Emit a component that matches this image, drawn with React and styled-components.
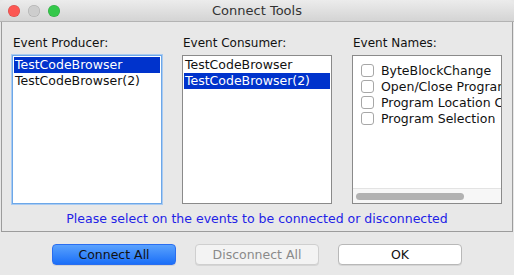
import React from "react";
import styled, { createGlobalStyle } from "styled-components";

const GlobalStyle = createGlobalStyle`
  html, body {
    margin: 0;
    padding: 0;
    background: #e8e8e8;
  }
  body {
    font-family: "DejaVu Sans", "Liberation Sans", sans-serif;
    font-size: 12.5px;
    color: #111;
  }
`;

const Window = styled.div`
  width: 514px;
  height: 275px;
  display: flex;
  flex-direction: column;
  background: #e8e8e8;
  overflow: hidden;
`;

const TitleBar = styled.div`
  height: 22px;
  box-sizing: border-box;
  display: flex;
  align-items: center;
  position: relative;
  background: linear-gradient(#ececec, #d4d4d4);
  border-bottom: 1px solid #b3b3b3;
  border-radius: 5px 5px 0 0;
  padding-left: 8px;
  gap: 8px;
`;

const Light = styled.span`
  width: 12px;
  height: 12px;
  border-radius: 50%;
  background: ${({ color }) => color};
  box-shadow: inset 0 0 0 0.5px rgba(0, 0, 0, 0.18);
`;

const Title = styled.div`
  position: absolute;
  left: 0;
  right: 0;
  text-align: center;
  font-size: 13px;
  color: #333;
  pointer-events: none;
`;

const Panel = styled.div`
  margin: 0 1px;
  height: 210px;
  box-sizing: border-box;
  border: 1px solid #9c9c9c;
  border-top: none;
  display: flex;
  flex-direction: column;
  padding: 9px 10px 0 10px;
`;

const Columns = styled.div`
  display: flex;
  gap: 20px;
`;

const Column = styled.div`
  width: 150px;
  display: flex;
  flex-direction: column;
`;

const Label = styled.div`
  height: 24px;
  box-sizing: border-box;
  padding: 2px 0 0 1px;
  line-height: 20px;
  font-size: 12px;
`;

const ListBox = styled.div`
  height: 149px;
  box-sizing: border-box;
  background: #fff;
  border: 1px solid ${({ focused }) => (focused ? "#6ca7e8" : "#8a8a8a")};
  box-shadow: ${({ focused }) => (focused ? "0 0 0 1px #a9cbf2" : "none")};
  padding: 1px;
  display: flex;
  flex-direction: column;
  position: relative;
  overflow: hidden;
`;

const ListItem = styled.div`
  height: 16px;
  line-height: 16px;
  padding-left: 1px;
  white-space: nowrap;
  background: ${({ selected }) => (selected ? "#0033cc" : "transparent")};
  color: ${({ selected }) => (selected ? "#fff" : "#111")};
`;

const CheckList = styled.div`
  display: flex;
  flex-direction: column;
  padding-top: 5px;
`;

const CheckRow = styled.label`
  height: 16px;
  display: flex;
  align-items: center;
  gap: 7px;
  padding-left: 7px;
  white-space: nowrap;
`;

const Box = styled.span`
  flex: none;
  width: 13px;
  height: 13px;
  box-sizing: border-box;
  border: 1px solid #a7a7a7;
  border-radius: 3px;
  background: #fff;
`;

const ScrollTrack = styled.div`
  position: absolute;
  left: 0;
  right: 0;
  bottom: 0;
  height: 14px;
  background: #f7f7f7;
  border-top: 1px solid #e3e3e3;
  display: flex;
  align-items: center;
  padding-left: 3px;
`;

const ScrollThumb = styled.div`
  width: 108px;
  height: 7px;
  border-radius: 4px;
  background: #b2b2b2;
`;

const Message = styled.div`
  margin-top: 7px;
  text-align: center;
  color: #2222e6;
  line-height: 16px;
`;

const ButtonRow = styled.div`
  display: flex;
  justify-content: center;
  gap: 19px;
  padding-top: 12px;
`;

const Button = styled.button`
  width: 124px;
  height: 21px;
  box-sizing: border-box;
  font-family: inherit;
  font-size: 12.5px;
  border-radius: 4px;
  padding: 0;
  border: 1px solid
    ${({ variant }) =>
      variant === "primary" ? "#2a6ef0" : variant === "disabled" ? "#cfcfcf" : "#b8b8b8"};
  background: ${({ variant }) =>
    variant === "primary"
      ? "linear-gradient(#5aa2fd, #1b6ff8)"
      : variant === "disabled"
      ? "#f3f3f3"
      : "#fff"};
  color: ${({ variant }) =>
    variant === "primary" ? "#111" : variant === "disabled" ? "#8a8a8a" : "#111"};
  box-shadow: 0 1px 0 rgba(0, 0, 0, 0.08);
`;

export default function App() {
  const events = [
    "ByteBlockChange",
    "Open/Close Program",
    "Program Location Changed",
    "Program Selection",
  ];
  return (
    <Window>
      <GlobalStyle />
      <TitleBar>
        <Light color="#fc5753" />
        <Light color="#cdcdcd" />
        <Light color="#34c84a" />
        <Title>Connect Tools</Title>
      </TitleBar>
      <Panel>
        <Columns>
          <Column>
            <Label>Event Producer:</Label>
            <ListBox focused>
              <ListItem selected>TestCodeBrowser</ListItem>
              <ListItem>TestCodeBrowser(2)</ListItem>
            </ListBox>
          </Column>
          <Column>
            <Label>Event Consumer:</Label>
            <ListBox>
              <ListItem>TestCodeBrowser</ListItem>
              <ListItem selected>TestCodeBrowser(2)</ListItem>
            </ListBox>
          </Column>
          <Column>
            <Label>Event Names:</Label>
            <ListBox>
              <CheckList>
                {events.map((name) => (
                  <CheckRow key={name}>
                    <Box />
                    {name}
                  </CheckRow>
                ))}
              </CheckList>
              <ScrollTrack>
                <ScrollThumb />
              </ScrollTrack>
            </ListBox>
          </Column>
        </Columns>
        <Message>Please select on the events to be connected or disconnected</Message>
      </Panel>
      <ButtonRow>
        <Button variant="primary">Connect All</Button>
        <Button variant="disabled">Disconnect All</Button>
        <Button>OK</Button>
      </ButtonRow>
    </Window>
  );
}
